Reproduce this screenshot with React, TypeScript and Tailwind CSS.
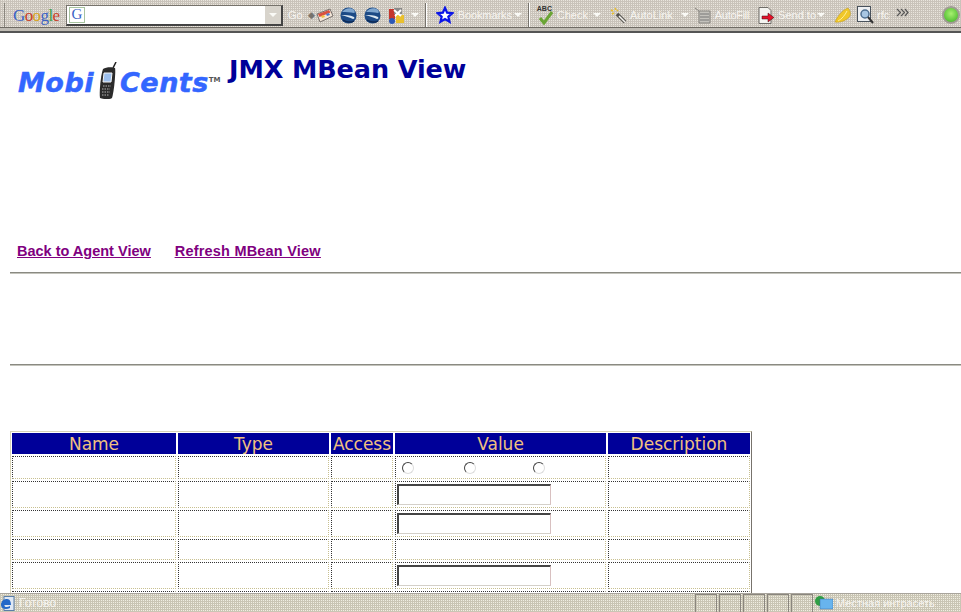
const columns = ["Name", "Type", "Access", "Value", "Description"];
const rows = [
  { height: "h-[23px]", kind: "radio" },
  { height: "h-[27px]", kind: "input" },
  { height: "h-[27px]", kind: "input" },
  { height: "h-[21px]", kind: "empty" },
  { height: "h-[27px]", kind: "input" },
  { height: "h-[27px]", kind: "empty" },
];

const Separator = () => <div className="mx-[3px] h-[24px] w-[2px] shrink-0 border-r border-l border-r-white border-l-[#77736c]" />;

const Globe = () => (
  <svg width="17" height="17" viewBox="0 0 17 17" className="shrink-0">
    <circle cx="8.5" cy="8.5" r="8" fill="#1c4a86" />
    <path d="M2 5c3-4 9-5 12-2 1 1 1 3 0 3-4-1-8-1-12-1z" fill="#7fa6cf" />
    <path d="M1 8c4 0 9 0 13 2 1 1 0 2-1 2-4-2-8-3-12-4z" fill="#dce8f2" />
    <path d="M3 13c3 2 8 3 11 1" stroke="#0e2a55" strokeWidth="1.500" fill="none" />
  </svg>
);

const Label = ({ children, className = "" }: { children: React.ReactNode; className?: string }) => (
  <span className={`whitespace-nowrap leading-none text-[#f6f4f0] ${className}`}>{children}</span>
);

const Caret = ({ className = "" }: { className?: string }) => (
  <svg width="8" height="4" viewBox="0 0 8 4" className={`shrink-0 ${className}`}>
    <path d="M0 0h8L4 4z" fill="#fafaf6" />
  </svg>
);

const Toolbar = () => (
  <div className="flex h-[27px] shrink-0 items-center bg-[conic-gradient(#e9e5dd_25%,#c9c3ba_0)] bg-[length:2px_2px] pt-[3px] pl-[4px] font-['Liberation_Sans',sans-serif]">
    <div className="h-[24px] w-px bg-[#8a867e]" />
    <span className="ml-[8px] w-[50px] font-['Liberation_Serif',serif] text-[17px] leading-none tracking-[-0.6px]">
      <span className="text-[#3c62c4]">G</span>
      <span className="text-[#c8402a]">o</span>
      <span className="text-[#d9a520]">o</span>
      <span className="text-[#3c62c4]">g</span>
      <span className="text-[#3f9e48]">l</span>
      <span className="text-[#c8402a]">e</span>
    </span>
    <div className="ml-[3px] flex h-[21px] w-[217px] items-center border-t border-r-2 border-b-2 border-l border-t-[#77736c] border-r-[#444] border-b-[#444] border-l-[#77736c] bg-white">
      <div className="ml-[2px] flex h-[16px] w-[16px] items-center justify-center border border-[#a8c4a0] font-['Liberation_Serif',serif] text-[15px] leading-none text-[#3c62c4]">
        G
      </div>
      <div className="ml-auto flex h-full w-[16px] items-center justify-center bg-[#d8d4cc]">
        <Caret />
      </div>
    </div>
    <Label className="ml-[5px] text-[11px]">Go</Label>
    <span className="ml-[5px] text-[9px] leading-none text-[#77736c]">◆</span>
    <svg width="18" height="15" viewBox="0 0 18 15" className="ml-[1px] shrink-0">
      <path d="M1 6l13-5 3 7-13 6z" fill="#f3e6d8" stroke="#77706c" />
      <path d="M2 6l11-4 1.500 2.500L3.500 9z" fill="#d9513f" />
      <path d="M5 8l3-1 1 2-3 1z" fill="#f0c040" />
      <path d="M10 6l3-1 1 2-3 1z" fill="#4c78c9" />
    </svg>
    <div className="ml-[6px]">
      <Globe />
    </div>
    <div className="ml-[7px]">
      <Globe />
    </div>
    <svg width="17" height="17" viewBox="0 0 17 17" className="ml-[7px] shrink-0">
      <rect x="1" y="2" width="6" height="10" fill="#c5362d" />
      <rect x="6" y="1" width="8" height="6" fill="#8a8a8a" />
      <rect x="8" y="8" width="8" height="8" fill="#eac02d" />
      <circle cx="4" cy="14" r="3" fill="#2d58b5" />
      <path d="M6 3l7 6M13 3L7 9" stroke="#fff" strokeWidth="2" />
    </svg>
    <Caret className="ml-[6px]" />
    <div className="ml-[3px]">
      <Separator />
    </div>
    <svg width="18" height="18" viewBox="0 0 24 24" className="ml-[6px] shrink-0" fill="none">
      <path d="M12 2.500l2.800 6.400 6.900.7-5.200 4.600 1.500 6.800-6-3.500-6 3.500 1.500-6.800-5.200-4.600 6.900-.7z" stroke="#0a14e8" strokeWidth="3" fill="#fff" />
    </svg>
    <Label className="ml-[4px] text-[11px] tracking-[-0.1px]">Bookmarks</Label>
    <Caret className="ml-[2px]" />
    <div className="ml-[3px]">
      <Separator />
    </div>
    <div className="relative ml-[4px] h-[20px] w-[18px] shrink-0">
      <span className="absolute top-0 left-0 text-[7px] leading-none font-bold text-[#333]">ABC</span>
      <svg width="16" height="14" viewBox="0 0 16 14" className="absolute bottom-0 left-[1px]">
        <path d="M2 7l4 5 8-11" stroke="#6aa534" strokeWidth="3" fill="none" />
      </svg>
    </div>
    <Label className="ml-[2px] text-[11px]">Check</Label>
    <Caret className="ml-[5px]" />
    <svg width="17" height="17" viewBox="0 0 17 17" className="ml-[9px] shrink-0">
      <path d="M7 7l8 8" stroke="#55534e" strokeWidth="3.500" />
      <path d="M9 9l6 6" stroke="#f6f4f0" strokeWidth="1.500" />
      <path d="M1 3l2 1M5 1l1 2M2 7l2-1M7 3l1 1" stroke="#eac02d" strokeWidth="1.500" />
    </svg>
    <Label className="ml-[3px] text-[11px]">AutoLink</Label>
    <Caret className="ml-[8px]" />
    <svg width="16" height="17" viewBox="0 0 16 17" className="ml-[6px] shrink-0">
      <path d="M0 1l4 3h11v12H4V4" fill="#c4c2bc" stroke="#85837e" />
      <path d="M5 7h9M5 10h9M5 13h9" stroke="#777" />
    </svg>
    <Label className="ml-[4px] text-[11px] tracking-[-0.3px]">AutoFill</Label>
    <svg width="18" height="17" viewBox="0 0 18 17" className="ml-[9px] shrink-0">
      <path d="M1 0.500h9l3 3v13H1z" fill="#f4f4f0" stroke="#6f6d68" />
      <path d="M4 9h6V6l6 4.500-6 4.500v-3H4z" fill="#e3122a" stroke="#3b0c10" strokeWidth="0.500" />
    </svg>
    <Label className="ml-[2px] text-[11px]">Send to</Label>
    <Caret className="ml-[1px]" />
    <svg width="18" height="17" viewBox="0 0 18 17" className="ml-[9px] shrink-0">
      <path d="M1 15C3 10 8 3 14 1c2 2 3 5 2 8-3 4-9 7-15 6z" fill="#f0c728" stroke="#b8941a" strokeWidth="0.500" />
      <path d="M4 14c4-2 7-6 9-10" stroke="#fff09a" fill="none" />
    </svg>
    <svg width="17" height="18" viewBox="0 0 17 18" className="ml-[5px] shrink-0">
      <rect x="0.500" y="0.500" width="13" height="15" fill="#eef0f2" stroke="#49525c" />
      <circle cx="8" cy="8" r="4" fill="#a8c6e2" stroke="#4f6f90" strokeWidth="1.500" />
      <path d="M11 11l5 6" stroke="#333" strokeWidth="2" />
    </svg>
    <Label className="ml-[3px] text-[11px]">rfc</Label>
    <svg width="13" height="9" viewBox="0 0 13 9" className="-mt-[6px] ml-[7px] shrink-0" fill="none" stroke="#555" strokeWidth="1.200">
      <path d="M1 1l3.500 3.500L1 8M5 1l3.500 3.500L5 8M9 1l3 3.500L9 8" />
    </svg>
    <div className="mr-[1px] ml-auto h-[18px] w-[18px] rounded-full border-2 border-[#a09c94] bg-[radial-gradient(circle_at_50%_40%,#a8f070,#38b020)]" />
  </div>
);

const Logo = () => (
  <div className="flex h-[40px] w-[215px] shrink-0 items-end font-['DejaVu_Sans',sans-serif] text-[27px] leading-[30px] font-bold tracking-[0.5px] text-[#3366ff] italic [-webkit-text-stroke:0.5px_#3366ff]">
    <span>Mobi</span>
    <svg width="20" height="37" viewBox="0 0 20 37" className="mb-[-1px] ml-[4px] shrink-0">
      <path d="M15 6l3-6" stroke="#222" strokeWidth="1.500" />
      <path d="M5 7c3-2 9-2 12-1 1 3-1 24-3 30-3 2-10 1-12 0-1-6 1-24 3-29z" fill="#2b2b2b" />
      <path d="M6 11h8l-1 9H5z" fill="#9dc0ee" stroke="#f4f4f4" />
      <path d="M5 24h8M4 27h8M4 30h8M4 33h7" stroke="#b5b5b5" strokeDasharray="1.500 1" />
    </svg>
    <span className="ml-[2px]">Cents</span>
    <span className="mb-[14px] text-[7px] leading-none font-bold tracking-normal text-[#555] not-italic [-webkit-text-stroke:0]">TM</span>
  </div>
);

const Radio = ({ className }: { className: string }) => (
  <span className={`block h-[12px] w-[12px] shrink-0 rounded-full border border-t-[#444] border-r-[#ddd] border-b-[#ddd] border-l-[#444] bg-white ${className}`} />
);

const ValueCell = ({ kind }: { kind: string }) => {
  if (kind === "radio") {
    return (
      <div className="flex h-full items-center">
        <Radio className="ml-[6px]" />
        <Radio className="ml-[50px]" />
        <Radio className="ml-[57px]" />
      </div>
    );
  }
  if (kind === "input") {
    return (
      <div className="h-full pt-[2px] pl-px">
        <div className="h-[21px] w-[154px] border-t-2 border-r border-b border-l-2 border-t-[#444] border-r-[#d8c0c0] border-b-[#d4d0c8] border-l-[#444] bg-white" />
      </div>
    );
  }
  return null;
};

export default function App() {
  return (
    <div className="flex h-[612px] w-[961px] flex-col overflow-hidden bg-white font-['DejaVu_Sans',sans-serif]">
      <Toolbar />
      <div className="h-[6px] shrink-0 border-t border-b-2 border-t-[#6f6b64] border-b-[#555] bg-[#c0bcb4]" />
      <main className="min-h-0 flex-1 overflow-hidden">
        <div className="flex items-start pt-[20px] pl-[14px]">
          <div className="mt-[5px] ml-[4px]">
            <Logo />
          </div>
          <h1 className="mt-px -ml-[4px] text-[25.5px] leading-[30px] font-bold tracking-[-0.1px] text-[#000099]">JMX MBean View</h1>
        </div>
        <div className="mt-[145px] flex gap-[24px] pl-[17px] font-['Liberation_Sans',sans-serif] text-[14.5px] leading-[16px] font-bold text-[#800080] underline">
          <a>Back to Agent View</a>
          <a className="tracking-[0.2px]">Refresh MBean View</a>
        </div>
        <div className="mt-[13px] ml-[10px] h-[2px] border-t border-b border-t-[#8a8a82] border-b-[#c4c4bc]" />
        <div className="mt-[90px] ml-[10px] h-[2px] border-t border-b border-t-[#8a8a82] border-b-[#c4c4bc]" />
        <div className="mt-[65px] ml-[10px] w-[742px] border border-t-[#d8d4b8] border-r-[#77736c] border-b-[#77736c] border-l-[#d8d4b8] p-px">
          <div className="grid grid-cols-[164px_151px_62px_211px_142px] gap-[2px]">
            {columns.map((name) => (
              <div key={name} className="flex h-[21px] items-center justify-center bg-[#000099] pt-px text-[17px] leading-none text-[#f0c080]">
                {name}
              </div>
            ))}
            {rows.map((row, i) =>
              columns.map((name) => (
                <div key={`${i}-${name}`} className={`${row.height} border border-dotted border-t-[#333] border-r-[#c8c090] border-b-[#c8c090] border-l-[#333] bg-white`}>
                  {name === "Value" && <ValueCell kind={row.kind} />}
                </div>
              )),
            )}
          </div>
        </div>
      </main>
      <footer className="flex h-[19px] shrink-0 items-center border-t border-[#a8a49c] bg-[conic-gradient(#f0eee2_25%,#c9c5b4_0)] bg-[length:2px_2px] font-['Liberation_Sans',sans-serif]">
        <div className="flex flex-1 items-center">
          <svg width="15" height="15" viewBox="0 0 15 15" className="shrink-0">
            <rect x="4" y="0.500" width="10" height="14" fill="#dfe8f4" stroke="#5a7ea8" />
            <path d="M1 9c0-4 3-6 6-6s4 3 4 6H4c0 2 3 3 6 1v2c-4 2-9 1-9-3z" fill="#2468c8" />
          </svg>
          <Label className="ml-[4px] text-[12px]">Готово</Label>
        </div>
        <div className="flex h-full gap-[2px]">
          {[0, 1, 2, 3, 4].map((n) => (
            <div key={n} className="h-full w-[22px] border-x border-t border-[#8a867e]" />
          ))}
        </div>
        <div className="flex w-[148px] items-center">
          <svg width="18" height="15" viewBox="0 0 18 15" className="ml-[2px] shrink-0">
            <circle cx="5" cy="5" r="5" fill="#2f9e44" />
            <rect x="5" y="3" width="13" height="10" fill="#68b4ee" stroke="#3a6ea8" strokeWidth="0.500" />
          </svg>
          <Label className="ml-[3px] text-[11px]">Местная интрасеть</Label>
        </div>
      </footer>
    </div>
  );
}
